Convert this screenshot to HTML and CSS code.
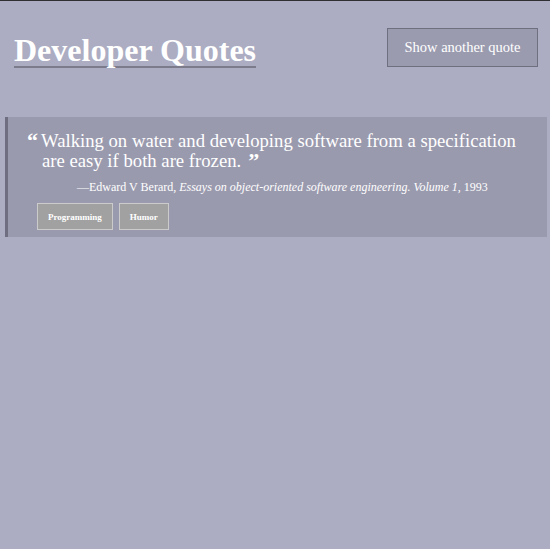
FILE: index.html
```html
<!DOCTYPE html>
<html lang="en">
<head>
<meta charset="utf-8">
<title>Developer Quotes</title>
<link rel="stylesheet" href="styles.css">
</head>
<body>
<div class="topline"></div>
<header class="header">
  <h1 class="title">Developer Quotes</h1>
  <button class="another">Show another quote</button>
</header>
<main>
  <blockquote class="quote">
    <p class="text"><span class="mark open">“</span>Walking on water and developing software from a specification are easy if both are frozen.<span class="mark close">”</span></p>
    <p class="cite">—Edward V Berard, <em>Essays on object-oriented software engineering. Volume 1</em>, 1993</p>
    <div class="tags">
      <span class="tag">Programming</span>
      <span class="tag">Humor</span>
    </div>
  </blockquote>
</main>
</body>
</html>
```
FILE: styles.css
```css
html, body {
  margin: 0;
  padding: 0;
  background: #acadc2;
  height: 100%;
}
body {
  font-family: "Liberation Serif", serif;
  color: #fff;
}
.topline {
  height: 1px;
  background: #2e2e33;
}
.header {
  display: flex;
  justify-content: space-between;
  align-items: flex-start;
  padding: 27px 12px 0 14px;
  height: 89px;
  box-sizing: border-box;
}
.title {
  margin: 6px 0 0;
  font-size: 32px;
  font-weight: bold;
  line-height: 32px;
  border-bottom: 2px solid #7b7b8c;
  padding-bottom: 0;
}
.another {
  width: 151px;
  height: 39px;
  background: #9b9baf;
  border: 1px solid #6f6f80;
  color: #fff;
  font-family: "Liberation Serif", serif;
  font-size: 14.5px;
  padding: 0 0 1px;
}
main {
  padding: 27px 3px 0 5px;
}
.quote {
  margin: 0;
  background: #9a9aae;
  border-left: 3px solid #6e6e80;
  padding: 14px 10px 8px 34px;
  height: 120px;
  box-sizing: border-box;
}
.text {
  margin: 0;
  font-size: 18.7px;
  line-height: 20px;
}
.mark {
  font-weight: bold;
  font-size: 22px;
  vertical-align: -1px;
  line-height: 0;
}
.mark.open {
  margin-left: -15px;
  margin-right: 3px;
}
.mark.close {
  margin-left: 7px;
}
.cite {
  margin: 9px 0 0 35px;
  font-size: 12px;
  line-height: 14px;
}
.tags {
  display: flex;
  gap: 6px;
  margin-top: 9px;
  margin-left: -5px;
}
.tag {
  display: inline-flex;
  align-items: center;
  justify-content: center;
  height: 27px;
  box-sizing: border-box;
  padding: 0 10px;
  background: #a1a1a1;
  border: 1px solid #cbcbcb;
  font-size: 9px;
  font-weight: bold;
}
```
